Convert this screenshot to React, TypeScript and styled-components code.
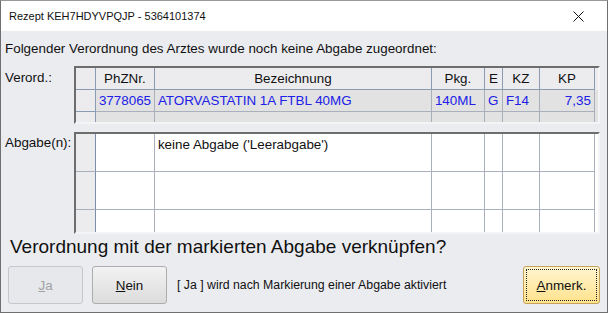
import React from "react";
import styled, { createGlobalStyle } from "styled-components";

const GlobalStyle = createGlobalStyle`
  html, body {
    margin: 0;
    padding: 0;
    background: #ffffff;
  }
  body {
    font-family: "Liberation Sans", Arial, sans-serif;
    color: #000;
  }
`;

type Row = { cells: string[] };

const columns = [
  { width: 20, title: "", align: "left" },
  { width: 59, title: "PhZNr.", align: "left" },
  { width: 277, title: "Bezeichnung", align: "left" },
  { width: 53, title: "Pkg.", align: "left" },
  { width: 18, title: "E", align: "left" },
  { width: 37, title: "KZ", align: "left" },
  { width: 55, title: "KP", align: "right" },
];

const template = columns.map((c) => `${c.width}px`).join(" ") + " 1fr";

export default function App() {
  const verord: string[] = ["", "3778065", "ATORVASTATIN 1A FTBL 40MG", "140ML", "G", "F14", "7,35"];
  const abgaben: Row[] = [
    { cells: ["", "", "keine Abgabe ('Leerabgabe')", "", "", "", ""] },
    { cells: ["", "", "", "", "", "", ""] },
    { cells: ["", "", "", "", "", "", ""] },
  ];

  return (
    <>
      <GlobalStyle />
      <Window>
        <TitleBar>
          <Title>Rezept KEH7HDYVPQJP - 5364101374</Title>
          <CloseButton>
            <svg width="11" height="11" viewBox="0 0 11 11">
              <path d="M0.5 0.5 L10.5 10.5 M10.5 0.5 L0.5 10.5" stroke="#111" strokeWidth="1" />
            </svg>
          </CloseButton>
        </TitleBar>
        <Body>
          <Intro>Folgender Verordnung des Arztes wurde noch keine Abgabe zugeordnet:</Intro>
          <Section $gap={10}>
            <Label $top={4}>Verord.:</Label>
            <Grid $height={58} $filler="#e2e2e2">
              <GridRow $template={template}>
                {columns.map((c, i) => (
                  <HeadCell key={i}>{c.title}</HeadCell>
                ))}
                <Filler $bg="#ececef" />
              </GridRow>
              <GridRow $template={template}>
                {verord.map((v, i) => (
                  <DataCell key={i} $indicator={i === 0} $right={columns[i].align === "right"}>
                    {v}
                  </DataCell>
                ))}
                <Filler $bg="#e2e2e2" />
              </GridRow>
              <GridRow $template={template}>
                {columns.map((_, i) => (
                  <DataCell key={i} $indicator={i === 0} />
                ))}
                <Filler $bg="#e2e2e2" />
              </GridRow>
            </Grid>
          </Section>
          <Section $gap={8}>
            <Label $top={3}>Abgabe(n):</Label>
            <Grid $height={102} $filler="#ffffff">
              {abgaben.map((r, ri) => (
                <GridRow key={ri} $template={template}>
                  {r.cells.map((v, i) => (
                    <EmptyCell key={i} $indicator={i === 0}>
                      {v}
                    </EmptyCell>
                  ))}
                  <Filler $bg="#ffffff" />
                </GridRow>
              ))}
            </Grid>
          </Section>
          <Question>Verordnung mit der markierten Abgabe verknüpfen?</Question>
          <ButtonRow>
            <Button $variant="disabled">
              <u>J</u>a
            </Button>
            <Button $variant="normal">
              <u>N</u>ein
            </Button>
            <Hint>[ Ja ] wird nach Markierung einer Abgabe aktiviert</Hint>
            <Button $variant="accent">
              <Focus>
                <u>A</u>nmerk.
              </Focus>
            </Button>
          </ButtonRow>
        </Body>
      </Window>
    </>
  );
}

const Window = styled.div`
  width: 608px;
  height: 313px;
  box-sizing: border-box;
  border: 1px solid #6f6f6f;
  border-top-color: #9a9a9a;
  background: #ebecf0;
  display: flex;
  flex-direction: column;
  overflow: hidden;
`;

const TitleBar = styled.div`
  height: 30px;
  background: #ffffff;
  display: flex;
  align-items: center;
  justify-content: space-between;
  padding: 0 0 0 8px;
`;

const Title = styled.div`
  font-size: 11px;
  color: #111;
`;

const CloseButton = styled.div`
  width: 46px;
  height: 30px;
  display: flex;
  align-items: center;
  justify-content: center;
  margin-right: 6px;
`;

const Body = styled.div`
  flex: 1;
  display: flex;
  flex-direction: column;
  padding: 0 7px 0 4px;
`;

const Intro = styled.div`
  font-size: 13.4px;
  line-height: 15px;
  margin-top: 10px;
  color: #111;
`;

const Section = styled.div<{ $gap: number }>`
  display: flex;
  margin-top: ${(p) => p.$gap}px;
`;

const Label = styled.div<{ $top: number }>`
  width: 69px;
  font-size: 13.4px;
  padding-top: ${(p) => p.$top}px;
  color: #111;
`;

const Grid = styled.div<{ $height: number; $filler: string }>`
  width: 527px;
  height: ${(p) => p.$height}px;
  box-sizing: border-box;
  border-top: 2px solid #6d6d6d;
  border-left: 2px solid #6d6d6d;
  border-right: 2px solid #f4f4f6;
  border-bottom: 2px solid #f4f4f6;
  background: ${(p) => p.$filler};
  overflow: hidden;
`;

const GridRow = styled.div<{ $template: string }>`
  display: grid;
  grid-template-columns: ${(p) => p.$template};
`;

const HeadCell = styled.div`
  height: 22px;
  box-sizing: border-box;
  border-right: 1px solid #8a9ab2;
  border-bottom: 1px solid #8a9ab2;
  background: #ececef;
  font-size: 13.4px;
  color: #111;
  display: flex;
  align-items: center;
  justify-content: center;
`;

const DataCell = styled.div<{ $indicator?: boolean; $right?: boolean }>`
  height: 22px;
  box-sizing: border-box;
  border-right: 1px solid ${(p) => (p.$indicator ? "#8a9ab2" : "#a9b0bb")};
  border-bottom: 1px solid ${(p) => (p.$indicator ? "#8a9ab2" : "#a9b0bb")};
  background: ${(p) => (p.$indicator ? "#ececef" : "#e2e2e2")};
  font-size: 13.4px;
  color: #2020e6;
  display: flex;
  align-items: center;
  justify-content: ${(p) => (p.$right ? "flex-end" : "flex-start")};
  padding: 0 3px;
  white-space: nowrap;
`;

const EmptyCell = styled.div<{ $indicator?: boolean }>`
  height: 38px;
  box-sizing: border-box;
  border-right: 1px solid ${(p) => (p.$indicator ? "#7d8ea8" : "#a9b0bb")};
  border-bottom: 1px solid #a9b0bb;
  background: ${(p) => (p.$indicator ? "#ececef" : "#ffffff")};
  font-size: 13.4px;
  color: #111;
  padding: 3px 3px 0;
  white-space: nowrap;
`;

const Filler = styled.div<{ $bg: string }>`
  background: ${(p) => p.$bg};
`;

const Question = styled.div`
  font-size: 19px;
  line-height: 22px;
  margin-top: 2px;
  padding-left: 5px;
  color: #111;
`;

const ButtonRow = styled.div`
  display: flex;
  align-items: center;
  margin-top: 8px;
  padding-left: 3px;
`;

const Button = styled.div<{ $variant: "disabled" | "normal" | "accent" }>`
  width: ${(p) => (p.$variant === "accent" ? "77px" : "75px")};
  height: 38px;
  box-sizing: border-box;
  border-radius: 3px;
  display: flex;
  align-items: center;
  justify-content: center;
  font-size: 13.4px;
  margin-right: ${(p) => (p.$variant === "disabled" ? "9px" : "0")};
  margin-left: ${(p) => (p.$variant === "accent" ? "auto" : "0")};
  color: ${(p) => (p.$variant === "disabled" ? "#a2a2a2" : "#111")};
  border: 1px solid
    ${(p) =>
      p.$variant === "disabled" ? "#c4c8cd" : p.$variant === "accent" ? "#c5a25a" : "#adadad"};
  background: ${(p) =>
    p.$variant === "disabled"
      ? "#e6e8eb"
      : p.$variant === "accent"
      ? "linear-gradient(#fff5cf, #ffe28c)"
      : "linear-gradient(#f2f2f2, #dcdcdc)"};
`;

const Focus = styled.div`
  width: 71px;
  height: 32px;
  box-sizing: border-box;
  border: 1px dotted #222;
  display: flex;
  align-items: center;
  justify-content: center;
`;

const Hint = styled.div`
  font-size: 12.3px;
  margin-left: 10px;
  color: #111;
`;
